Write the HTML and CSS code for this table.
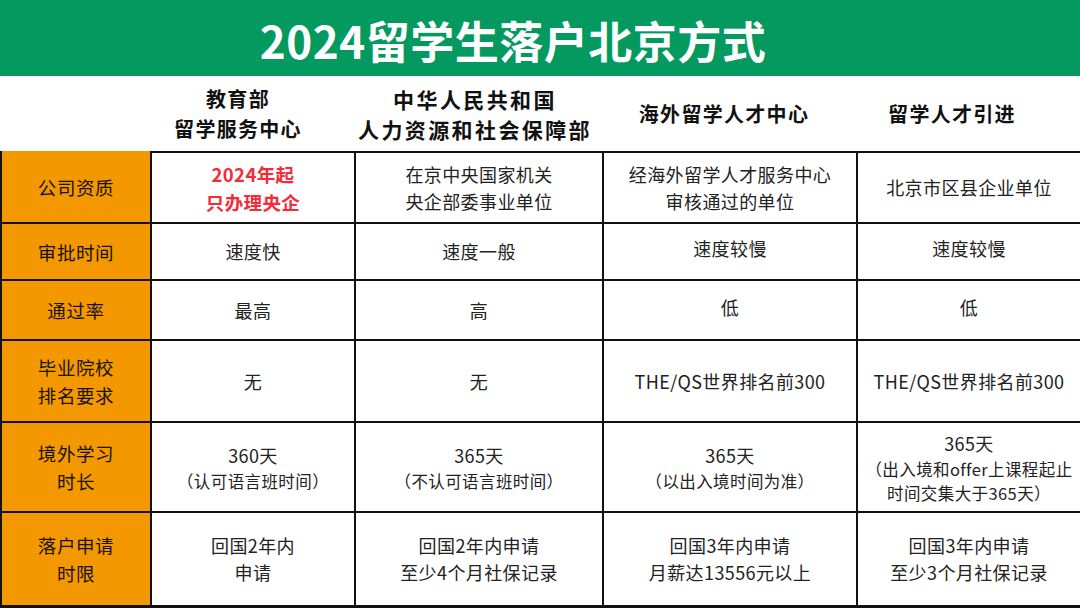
FILE: index.html
```html
<!DOCTYPE html>
<html lang="zh-CN">
<head>
<meta charset="utf-8">
<title>2024留学生落户北京方式</title>
<link rel="stylesheet" href="styles.css">
</head>
<body>
<div class="page">
  <header class="banner"><h1 class="title">2024留学生落户北京方式</h1></header>
  <div class="heads">
    <div class="head"></div>
    <div class="head">教育部<br>留学服务中心</div>
    <div class="head wide">中华人民共和国<br>人力资源和社会保障部</div>
    <div class="head">海外留学人才中心</div>
    <div class="head">留学人才引进</div>
  </div>
  <div class="table">
    <div class="label first">公司资质</div>
    <div class="cell red">2024年起<br>只办理央企</div>
    <div class="cell">在京中央国家机关<br>央企部委事业单位</div>
    <div class="cell">经海外留学人才服务中心<br>审核通过的单位</div>
    <div class="cell">北京市区县企业单位</div>

    <div class="label">审批时间</div>
    <div class="cell">速度快</div>
    <div class="cell">速度一般</div>
    <div class="cell up">速度较慢</div>
    <div class="cell up">速度较慢</div>

    <div class="label">通过率</div>
    <div class="cell">最高</div>
    <div class="cell">高</div>
    <div class="cell up">低</div>
    <div class="cell up">低</div>

    <div class="label">毕业院校<br>排名要求</div>
    <div class="cell">无</div>
    <div class="cell">无</div>
    <div class="cell">THE/QS世界排名前300</div>
    <div class="cell">THE/QS世界排名前300</div>

    <div class="label">境外学习<br>时长</div>
    <div class="cell"><span>360天</span><span class="note">（认可语言班时间）</span></div>
    <div class="cell"><span>365天</span><span class="note">（不认可语言班时间）</span></div>
    <div class="cell"><span>365天</span><span class="note">（以出入境时间为准）</span></div>
    <div class="cell"><span>365天</span><span class="note">（出入境和offer上课程起止<br>时间交集大于365天）</span></div>

    <div class="label">落户申请<br>时限</div>
    <div class="cell">回国2年内<br>申请</div>
    <div class="cell">回国2年内申请<br>至少4个月社保记录</div>
    <div class="cell">回国3年内申请<br>月薪达13556元以上</div>
    <div class="cell">回国3年内申请<br>至少3个月社保记录</div>
  </div>
</div>
</body>
</html>
```

FILE: styles.css
```css
* { box-sizing: border-box; }
html, body {
  margin: 0;
  padding: 0;
  background: #fff;
}
body {
  width: 1080px;
  height: 608px;
  overflow: hidden;
  font-family: "Noto Sans CJK SC", "Noto Sans", sans-serif;
  color: #222;
}
.page {
  display: flex;
  flex-direction: column;
  width: 1080px;
}
.banner {
  height: 76px;
  background: #03995f;
  display: flex;
  align-items: center;
  justify-content: center;
  padding: 4px 54px 0 0;
}
.title {
  margin: 0;
  color: #fff;
  font-size: 44px;
  font-weight: 700;
  letter-spacing: 0.5px;
  line-height: 1;
}
.heads {
  height: 75px;
  display: grid;
  grid-template-columns: 150px 176px 298px 200px 1fr;
  align-items: center;
}
.head {
  text-align: center;
  font-size: 20px;
  font-weight: 700;
  line-height: 30px;
  letter-spacing: 1.3px;
  color: #111;
}
.head.wide {
  font-size: 21px;
  letter-spacing: 2.4px;
}
.table {
  display: grid;
  grid-template-columns: 148px 202px 246px 252px 1fr;
  grid-template-rows: 69px 55px 58px 80px 88px 92px;
  gap: 2px;
  padding: 2px 0 2px 2px;
  background: #111;
  height: 457px;
}
.label, .cell {
  display: flex;
  flex-direction: column;
  align-items: center;
  justify-content: center;
  text-align: center;
}
.label {
  background: #f39800;
  font-size: 18.5px;
  line-height: 28px;
  letter-spacing: 0.6px;
  color: #1a1200;
}
.label.first {
  margin-top: -2px;
}
.cell {
  background: #fff;
  font-size: 18px;
  line-height: 27px;
  letter-spacing: 0.4px;
}
.cell.up {
  padding-bottom: 6px;
}
.cell.red {
  color: #f52b3a;
  font-weight: 700;
  font-size: 18.5px;
  line-height: 28px;
}
.cell .note {
  font-size: 16.5px;
  line-height: 24px;
}
```
